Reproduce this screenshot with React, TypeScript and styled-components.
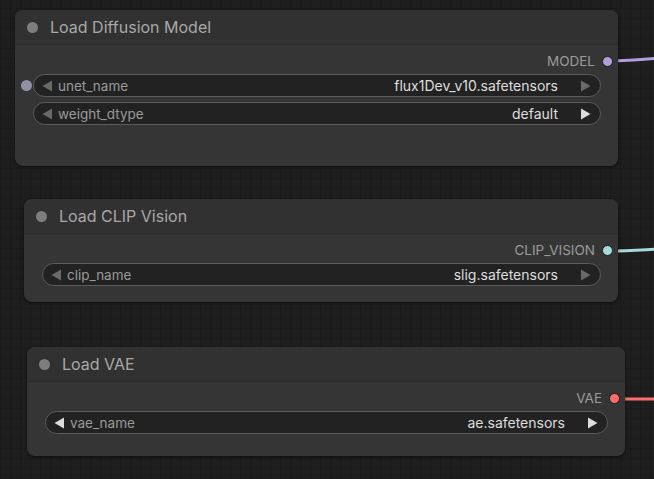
import React from "react";
import styled, { createGlobalStyle } from "styled-components";

const Global = createGlobalStyle`
  html, body {
    margin: 0;
    padding: 0;
    background: #1b1b1b;
  }
  body {
    font-family: Inter, "Noto Sans", "Liberation Sans", sans-serif;
  }
`;

type Widget = {
  name: string;
  value: string;
  input?: boolean;
  dimLeft?: boolean;
  dimRight?: boolean;
};

type NodeData = {
  title: string;
  x: number;
  y: number;
  width: number;
  height: number;
  output: string;
  color: string;
  widgets: Widget[];
};

const nodes: NodeData[] = [
  {
    title: "Load Diffusion Model",
    x: 15,
    y: 10,
    width: 603,
    height: 156,
    output: "MODEL",
    color: "#b39ddb",
    widgets: [
      { name: "unet_name", value: "flux1Dev_v10.safetensors", input: true, dimLeft: true, dimRight: true },
      { name: "weight_dtype", value: "default", dimLeft: true },
    ],
  },
  {
    title: "Load CLIP Vision",
    x: 24,
    y: 199,
    width: 594,
    height: 103,
    output: "CLIP_VISION",
    color: "#a8dadc",
    widgets: [{ name: "clip_name", value: "slig.safetensors", dimLeft: true, dimRight: true }],
  },
  {
    title: "Load VAE",
    x: 27,
    y: 347,
    width: 598,
    height: 109,
    output: "VAE",
    color: "#ff6e6e",
    widgets: [{ name: "vae_name", value: "ae.safetensors" }],
  },
];

const Arrow = ({ dir, dim }: { dir: "left" | "right"; dim?: boolean }) => (
  <svg width="11" height="12" viewBox="0 0 11 12">
    <path
      d={dir === "left" ? "M10 0.5 L0.5 6 L10 11.5 Z" : "M1 0.5 L10.5 6 L1 11.5 Z"}
      fill={dim ? "#6a6a6a" : "#dcdcdc"}
    />
  </svg>
);

const App = () => {
  return (
    <Canvas>
      <Global />
      <Wires width="654" height="479">
        <path d="M607 61 C 630 61, 640 60, 660 58" stroke="#b39ddb" strokeWidth="3" fill="none" />
        <path d="M608 251 C 630 251, 640 250, 660 249" stroke="#a8dadc" strokeWidth="3" fill="none" />
        <path d="M614 399 C 630 399, 640 399, 660 399" stroke="#ff6e6e" strokeWidth="3" fill="none" />
      </Wires>
      {nodes.map((node) => (
        <Node
          key={node.title}
          style={{ left: node.x, top: node.y, width: node.width, height: node.height }}
        >
          <TitleBar>
            <StatusDot />
            <Title>{node.title}</Title>
          </TitleBar>
          <Body>
            <OutputRow>
              <OutputLabel>{node.output}</OutputLabel>
              <Slot $color={node.color} />
            </OutputRow>
            {node.widgets.map((w) => (
              <ComboWidget key={w.name}>
                {w.input && <InputSlot />}
                <Arrow dir="left" dim={w.dimLeft} />
                <WidgetName>{w.name}</WidgetName>
                <WidgetValue>{w.value}</WidgetValue>
                <Arrow dir="right" dim={w.dimRight} />
              </ComboWidget>
            ))}
          </Body>
        </Node>
      ))}
    </Canvas>
  );
};

export default App;

const Canvas = styled.div`
  position: relative;
  width: 654px;
  height: 479px;
  overflow: hidden;
  background-color: #1e1e1e;
  background-image:
    repeating-linear-gradient(90deg, rgba(0, 0, 0, 0.18) 0 1px, transparent 1px 10px),
    repeating-linear-gradient(0deg, rgba(0, 0, 0, 0.12) 0 1px, transparent 1px 10px);
`;

const Wires = styled.svg`
  position: absolute;
  left: 0;
  top: 0;
`;

const Node = styled.div`
  position: absolute;
  box-sizing: border-box;
  display: flex;
  flex-direction: column;
  background: #353535;
  border-radius: 8px;
  box-shadow: 0 1px 3px rgba(0, 0, 0, 0.6);
`;

const TitleBar = styled.div`
  height: 34px;
  display: flex;
  align-items: center;
  padding-left: 12px;
  gap: 12px;
  background: #313131;
  border-radius: 8px 8px 0 0;
  border-bottom: 1px solid #2b2b2b;
`;

const StatusDot = styled.div`
  width: 11px;
  height: 11px;
  border-radius: 50%;
  background: #7d7d7d;
`;

const Title = styled.div`
  font-size: 16px;
  color: #a8a8a8;
`;

const Body = styled.div`
  display: flex;
  flex-direction: column;
  padding: 6px 17px 0 18px;
  gap: 5px;
`;

const OutputRow = styled.div`
  height: 20px;
  display: flex;
  align-items: center;
  justify-content: flex-end;
  margin-right: -12px;
  margin-bottom: -2px;
  gap: 7px;
`;

const OutputLabel = styled.div`
  font-size: 13.5px;
  color: #9a9a9a;
`;

const Slot = styled.div<{ $color: string }>`
  width: 9px;
  height: 9px;
  border-radius: 50%;
  background: ${(p) => p.$color};
  border: 1px solid #1a1a1a;
`;

const ComboWidget = styled.div`
  position: relative;
  height: 23px;
  box-sizing: border-box;
  display: flex;
  align-items: center;
  padding: 0 9px 0 8px;
  background: #222222;
  border: 1px solid #5c5c5c;
  border-radius: 12px;
`;

const InputSlot = styled.div`
  position: absolute;
  left: -13px;
  top: 5px;
  width: 11px;
  height: 11px;
  border-radius: 50%;
  background: #8f8fa6;
`;

const WidgetName = styled.div`
  flex: 1;
  margin-left: 5px;
  font-size: 13.5px;
  color: #9a9a9a;
`;

const WidgetValue = styled.div`
  font-size: 14px;
  color: #dedede;
  margin-right: 22px;
`;
